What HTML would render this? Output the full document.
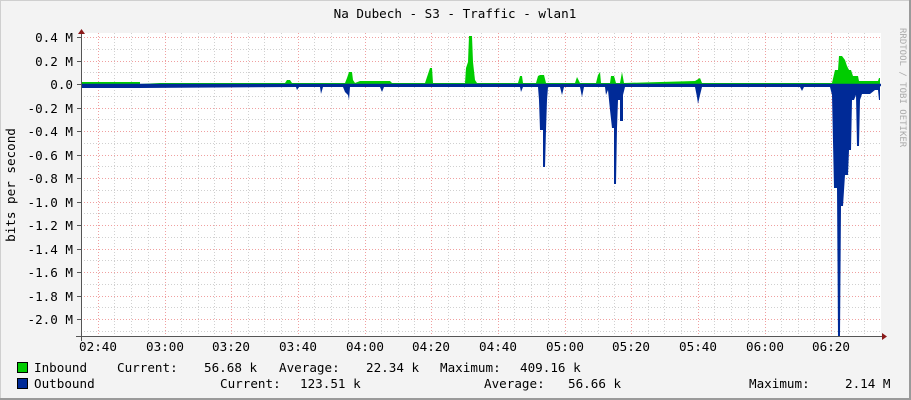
<!DOCTYPE html>
<html><head><meta charset="utf-8"><style>
html,body{margin:0;padding:0;background:#f3f3f3}
svg{display:block}
text{font-family:"DejaVu Sans Mono","Liberation Mono",monospace;font-size:12.6px;fill:#000}
</style></head><body>
<svg width="911" height="400" viewBox="0 0 911 400" xmlns="http://www.w3.org/2000/svg">
<rect x="0" y="0" width="911" height="400" fill="#f3f3f3"/>
<rect x="0.5" y="0.5" width="910" height="399" fill="none" stroke="#cfcfcf"/>
<line x1="0" y1="399" x2="911" y2="399" stroke="#9a9a9a" stroke-width="2"/>
<line x1="910" y1="0" x2="910" y2="400" stroke="#9a9a9a" stroke-width="2"/>
<rect x="81" y="33" width="800" height="303" fill="#fff"/>
<g stroke="#d0d0d0" stroke-dasharray="1,2" stroke-width="1">
<path d="M114.5 33V336M131.5 33V336M148.5 33V336M181.5 33V336M198.5 33V336M214.5 33V336M248.5 33V336M264.5 33V336M281.5 33V336M314.5 33V336M331.5 33V336M348.5 33V336M381.5 33V336M398.5 33V336M414.5 33V336M448.5 33V336M464.5 33V336M481.5 33V336M514.5 33V336M531.5 33V336M548.5 33V336M581.5 33V336M598.5 33V336M614.5 33V336M648.5 33V336M664.5 33V336M681.5 33V336M714.5 33V336M731.5 33V336M748.5 33V336M781.5 33V336M798.5 33V336M814.5 33V336M848.5 33V336M864.5 33V336M81.5 33V336"/>
<path d="M81 49.5H881M81 72.5H881M81 96.5H881M81 119.5H881M81 143.5H881M81 166.5H881M81 190.5H881M81 213.5H881M81 237.5H881M81 260.5H881M81 284.5H881M81 307.5H881M81 331.5H881"/>
</g>
<g stroke="#f0a0a0" stroke-dasharray="1,2" stroke-width="1">
<path d="M98.5 33V336M165.5 33V336M231.5 33V336M298.5 33V336M365.5 33V336M431.5 33V336M498.5 33V336M565.5 33V336M631.5 33V336M698.5 33V336M765.5 33V336M831.5 33V336"/>
<path d="M81 37.5H881M81 61.5H881M81 108.5H881M81 131.5H881M81 155.5H881M81 178.5H881M81 202.5H881M81 225.5H881M81 249.5H881M81 272.5H881M81 296.5H881M81 319.5H881"/>
</g>
<path fill="#00cc00" d="M81 84.5L81 82L140 82L140 84L160 83L285 83L287 80L290 80L292 83L345 83L347 78L349 72L352 72L353 80L355 83L360 81L390 81L392 83L425 83L427 77L430 68L432 68L433 83L465 83L466 68L468 62L469 36L472 36L473 62L475 80L477 83L518 83L520 76L522 76L523 83L536 83L538 76L540 75L544 75L546 83L575 83L577 77L580 83L596 83L598 75L600 72L601 83L610 83L611 76L614 76L616 83L620 83L622 72L624 83L695 81L700 78L702 83L832 83L835 70L838 70L839 56L842 56L845 60L847 66L849 70L851 70L853 76L858 76L859 81L870 81L878 81L879 78L880 78L880 84.5Z"/>
<path fill="#002a97" d="M81 84.5L81 88L140 88L296 87L297 90L299 87L320 87L321 94L323 87L343 87L345 92L348 95L349 100L350 87L380 87L382 92L384 87L520 87L521 92L523 87L538 87L539 100L540 130L543 130L543 167L545 167L546 130L547 100L548 87L560 87L562 95L564 87L580 87L582 97L584 87L605 87L606 95L608 90L610 110L612 128L614 128L614 184L616 184L617 128L618 100L620 100L620 121L623 121L623 95L625 87L695 87L697 97L698 104L700 95L702 87L800 87L802 91L804 87L830 87L832 95L834 188L837 188L838 336L840 336L841 206L843 206L845 175L848 175L849 150L851 150L852 100L854 100L856 95L857 146L859 146L860 100L862 94L870 94L875 90L878 90L879 100L880 100L880 84.5Z"/>
<line x1="81" y1="85" x2="881" y2="85" stroke="#002a97" stroke-width="2.5"/>
<line x1="81.5" y1="33" x2="81.5" y2="341" stroke="#555"/>
<line x1="76" y1="336.5" x2="884" y2="336.5" stroke="#555"/>
<path d="M78 34L81.5 29L85 34Z" fill="#8b1a1a"/>
<path d="M882 333L887 336.5L882 340Z" fill="#8b1a1a"/>
<g stroke="#555"><path d="M77 37.5H81M77 61.5H81M77 84.5H81M77 108.5H81M77 131.5H81M77 155.5H81M77 178.5H81M77 202.5H81M77 225.5H81M77 249.5H81M77 272.5H81M77 296.5H81M77 319.5H81"/></g>
<text x="455" y="18" text-anchor="middle">Na Dubech - S3 - Traffic - wlan1</text>
<g text-anchor="end">
<text x="73" y="42">0.4 M</text><text x="73" y="66">0.2 M</text><text x="73" y="89">0.0</text>
<text x="73" y="113">-0.2 M</text><text x="73" y="136">-0.4 M</text><text x="73" y="160">-0.6 M</text>
<text x="73" y="183">-0.8 M</text><text x="73" y="207">-1.0 M</text><text x="73" y="230">-1.2 M</text>
<text x="73" y="254">-1.4 M</text><text x="73" y="277">-1.6 M</text><text x="73" y="301">-1.8 M</text>
<text x="73" y="324">-2.0 M</text>
</g>
<g text-anchor="middle">
<text x="98" y="351">02:40</text><text x="165" y="351">03:00</text><text x="231" y="351">03:20</text>
<text x="298" y="351">03:40</text><text x="365" y="351">04:00</text><text x="431" y="351">04:20</text>
<text x="498" y="351">04:40</text><text x="565" y="351">05:00</text><text x="631" y="351">05:20</text>
<text x="698" y="351">05:40</text><text x="765" y="351">06:00</text><text x="831" y="351">06:20</text>
</g>
<text transform="translate(15,185) rotate(-90)" text-anchor="middle">bits per second</text>
<text transform="translate(900,28) rotate(90)" style="font-size:9px;fill:#aaa">RRDTOOL / TOBI OETIKER</text>
<rect x="17.5" y="362.5" width="10" height="10" fill="#00cc00" stroke="#000"/>
<rect x="17.5" y="378.5" width="10" height="10" fill="#002a97" stroke="#000"/>
<text x="34" y="372">Inbound</text>
<text x="117" y="372">Current:</text>
<text x="204" y="372">56.68 k</text>
<text x="279" y="372">Average:</text>
<text x="366" y="372">22.34 k</text>
<text x="440" y="372">Maximum:</text>
<text x="520" y="372">409.16 k</text>
<text x="34" y="388">Outbound</text>
<text x="220" y="388">Current:</text>
<text x="300" y="388">123.51 k</text>
<text x="484" y="388">Average:</text>
<text x="568" y="388">56.66 k</text>
<text x="749" y="388">Maximum:</text>
<text x="845" y="388">2.14 M</text>
</svg>
</body></html>
